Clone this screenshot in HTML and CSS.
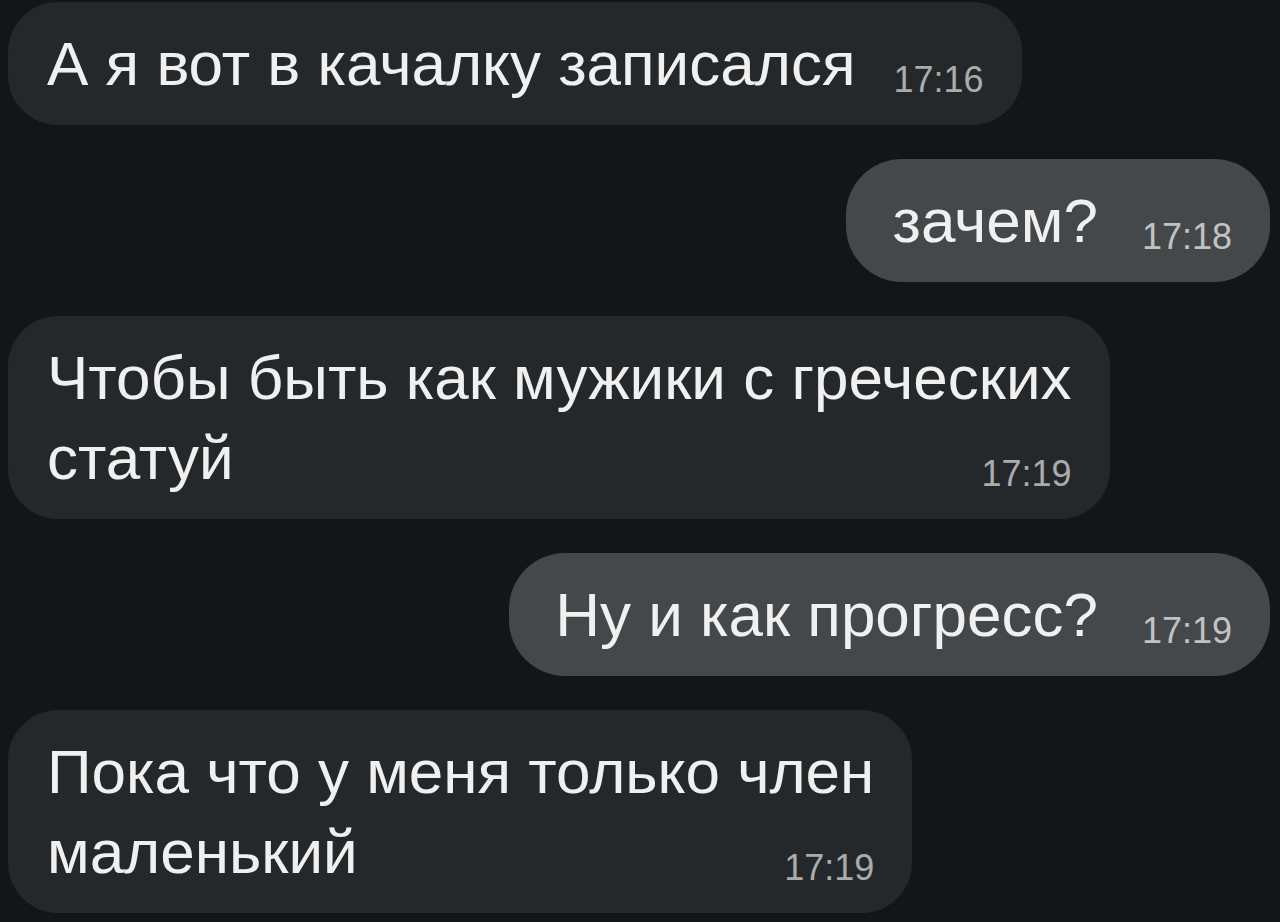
FILE: index.html
```html
<!DOCTYPE html>
<html lang="ru">
<head>
    <meta charset="UTF-8">
    <meta name="viewport" content="width=device-width, initial-scale=1.0">
    <title>Чат</title>
    <link rel="stylesheet" href="styles.css">
</head>
<body>
    <div id="chat">
        <div class="message incoming">
            <div class="bubble">А я вот в качалку записался<span class="time">17:16</span></div>
        </div>
        <div class="message outgoing">
            <div class="bubble">зачем?<span class="time">17:18</span></div>
        </div>
        <div class="message incoming">
            <div class="bubble">Чтобы быть как мужики с греческих<br>статуй<span class="time">17:19</span></div>
        </div>
        <div class="message outgoing">
            <div class="bubble">Ну и как прогресс?<span class="time">17:19</span></div>
        </div>
        <div class="message incoming">
            <div class="bubble">Пока что у меня только член<br>маленький<span class="time">17:19</span></div>
        </div>
    </div>
</body>
</html>
```

FILE: styles.css
```css
body {
    margin: 0;
    background-color: #141516;
    font-family: "Liberation Sans", Arial, sans-serif;
    color: #f0f0f0;
    height: 922px;
    overflow: hidden;
}
#chat {
    display: flex;
    flex-direction: column;
    gap: 34px;
    padding: 2px 10px 0 8px;
}
.message {
    display: flex;
}
.outgoing {
    justify-content: flex-end;
}
.bubble {
    padding: 22px 38px 21px 39px;
    border-radius: 50px;
    font-size: 62px;
    line-height: 80px;
    background-color: #25282a;
}
.outgoing .bubble {
    padding-left: 46px;
    border-radius: 56px;
    background-color: #44484a;
}
.time {
    float: right;
    margin: 32px 0 0 38px;
    font-size: 36px;
    line-height: 48px;
    color: #a9abad;
}
.outgoing .time {
    margin-left: 44px;
    color: #c0c2c3;
}
```
